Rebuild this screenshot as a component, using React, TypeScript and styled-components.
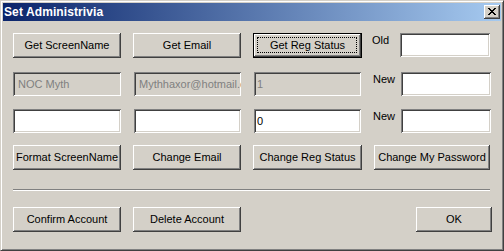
import React from "react";
import styled, { createGlobalStyle, css } from "styled-components";

const Global = createGlobalStyle`
  html, body { margin: 0; padding: 0; background: #d4d0c8; }
  body { font-family: "Liberation Sans", Arial, sans-serif; font-size: 11px; }
  * { box-sizing: border-box; }
`;

const Window = styled.div`
  width: 504px;
  height: 251px;
  background: #d4d0c8;
  border: 1px solid;
  border-color: #d4d0c8 #404040 #404040 #d4d0c8;
  box-shadow: inset 1px 1px #fff, inset -1px -1px #808080;
  padding: 2px;
  display: flex;
  flex-direction: column;
`;

const TitleBar = styled.div`
  height: 18px;
  background: linear-gradient(to right, #0a246a, #a6caf0);
  display: flex;
  align-items: center;
  justify-content: space-between;
  padding: 0 1px 0 1px;
`;

const Title = styled.span`
  color: #fff;
  font-weight: bold;
  font-size: 12px;
  font-family: "Liberation Sans", Arial, sans-serif;
  letter-spacing: 0.1px;
`;

const CloseBtn = styled.div`
  width: 16px;
  height: 14px;
  background: #d4d0c8;
  box-shadow: inset -1px -1px #404040, inset 1px 1px #fff, inset -2px -2px #808080;
  display: flex;
  align-items: center;
  justify-content: center;
  padding: 0 1px 1px 0;
`;

const Body = styled.div`
  flex: 1;
  padding: 12px 0 0 10px;
  display: flex;
  flex-direction: column;
`;

const Row = styled.div<{ $mt?: number; $h: number }>`
  display: flex;
  align-items: flex-start;
  height: ${(p) => p.$h}px;
  margin-top: ${(p) => p.$mt ?? 0}px;
`;

const raised = css`
  box-shadow: inset -1px -1px #404040, inset 1px 1px #fff, inset -2px -2px #808080,
    inset 2px 2px #d4d0c8;
`;

const Button = styled.button<{ $w?: number; $ml?: number; $mr?: number; $default?: boolean }>`
  position: relative;
  appearance: none;
  border: none;
  margin: 0 ${(p) => p.$mr ?? 0}px 0 ${(p) => p.$ml ?? 0}px;
  padding: 0 0 1px 0;
  width: ${(p) => p.$w ?? 108}px;
  height: 25px;
  background: #d4d0c8;
  color: #000;
  font-family: "Liberation Sans", Arial, sans-serif;
  font-size: 11px;
  ${raised}
  ${(p) =>
    p.$default &&
    css`
      border: 1px solid #000;
    `}
`;

const Focus = styled.span`
  position: absolute;
  inset: 3px 4px 4px 3px;
  border: 1px dotted #000;
  pointer-events: none;
`;

const Field = styled.input<{ $w?: number; $ml?: number; $pl?: number }>`
  appearance: none;
  border: none;
  outline: none;
  margin: 0 0 0 ${(p) => p.$ml ?? 0}px;
  width: ${(p) => p.$w ?? 108}px;
  height: 24px;
  padding: 0 0 1px ${(p) => p.$pl ?? 5}px;
  background: #fff;
  color: #000;
  -webkit-text-fill-color: #000;
  font-family: "Liberation Sans", Arial, sans-serif;
  font-size: 11px;
  box-shadow: inset 1px 1px #808080, inset -1px -1px #fff, inset 2px 2px #404040,
    inset -2px -2px #d4d0c8;
  &:disabled {
    background: #d4d0c8;
    color: #808080;
    -webkit-text-fill-color: #808080;
    opacity: 1;
  }
`;

const Label = styled.span<{ $ml?: number; $w: number }>`
  display: inline-block;
  margin-left: ${(p) => p.$ml ?? 0}px;
  width: ${(p) => p.$w}px;
  padding-top: 1px;
  line-height: 13px;
  color: #000;
`;

const Separator = styled.div`
  margin-top: 19px;
  width: 477px;
  height: 2px;
  border-top: 1px solid #808080;
  border-bottom: 1px solid #fff;
`;

const Spacer = styled.div`
  flex: 1;
`;

const XIcon = () => (
  <svg width="8" height="7" viewBox="0 0 8 7" shapeRendering="crispEdges">
    <path
      d="M0 0h2v1H0zM6 0h2v1H6zM1 1h2v1H1zM5 1h2v1H5zM2 2h4v1H2zM3 3h2v1H3zM2 4h4v1H2zM1 5h2v1H1zM5 5h2v1H5zM0 6h2v1H0zM6 6h2v1H6z"
      fill="#000"
    />
  </svg>
);

export default function App() {
  return (
    <>
      <Global />
      <Window>
        <TitleBar>
          <Title>Set Administrivia</Title>
          <CloseBtn>
            <XIcon />
          </CloseBtn>
        </TitleBar>
        <Body>
          <Row $h={25}>
            <Button>Get ScreenName</Button>
            <Button $ml={12}>Get Email</Button>
            <Button $ml={12} $w={109} $default>
              Get Reg Status
              <Focus />
            </Button>
            <Label $ml={10} $w={28}>Old</Label>
            <Field $w={90} />
          </Row>
          <Row $h={24} $mt={14}>
            <Field disabled defaultValue="NOC Myth" />
            <Field $ml={13} $w={107} disabled defaultValue="Mythhaxor@hotmail.com" />
            <Field $ml={13} $w={107} $pl={3} disabled defaultValue="1" />
            <Label $ml={12} $w={28}>New</Label>
            <Field $w={90} />
          </Row>
          <Row $h={24} $mt={13}>
            <Field />
            <Field $ml={13} $w={107} />
            <Field $ml={13} $w={107} $pl={3} defaultValue="0" />
            <Label $ml={12} $w={28}>New</Label>
            <Field $w={90} />
          </Row>
          <Row $h={25} $mt={12}>
            <Button>Format ScreenName</Button>
            <Button $ml={12}>Change Email</Button>
            <Button $ml={12} $w={109}>Change Reg Status</Button>
            <Button $ml={12} $w={116}>Change My Password</Button>
          </Row>
          <Separator />
          <Row $h={25} $mt={16}>
            <Button>Confirm Account</Button>
            <Button $ml={12}>Delete Account</Button>
            <Spacer />
            <Button $w={76} $mr={9}>OK</Button>
          </Row>
        </Body>
      </Window>
    </>
  );
}
